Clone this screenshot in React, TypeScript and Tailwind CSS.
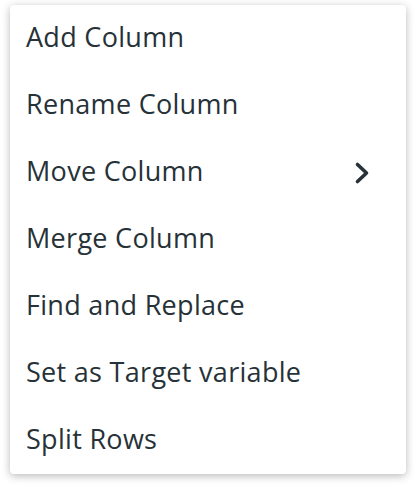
import React from "react";

const items = [
  "Add Column",
  "Rename Column",
  "Move Column",
  "Merge Column",
  "Find and Replace",
  "Set as Target variable",
  "Split Rows",
];

const Chevron = () => (
  <svg width="18" height="24" viewBox="0 0 18 24" fill="none" className="text-[#263238]">
    <path d="M4.5 3.5 L13.5 12 L4.5 20.5" stroke="currentColor" strokeWidth="3.6" strokeLinecap="round" strokeLinejoin="round" />
  </svg>
);

export default function App() {
  return (
    <div className="w-[416px] h-[490px] bg-white pt-[5px] pl-[10px]" style={{ fontFamily: '"Open Sans", sans-serif' }}>
      <ul className="w-[396px] bg-white rounded-[4px] shadow-[0_2px_8px_rgba(0,0,0,0.28)]">
        {items.map((label) => (
          <li key={label} className="flex items-center justify-between h-[67px] pl-[16px] pr-[35px] text-[27px] tracking-[0.3px] text-[#263238] cursor-pointer">
            <span className="mb-[2px]">{label}</span>
            {label === "Move Column" && <Chevron />}
          </li>
        ))}
      </ul>
    </div>
  );
}
